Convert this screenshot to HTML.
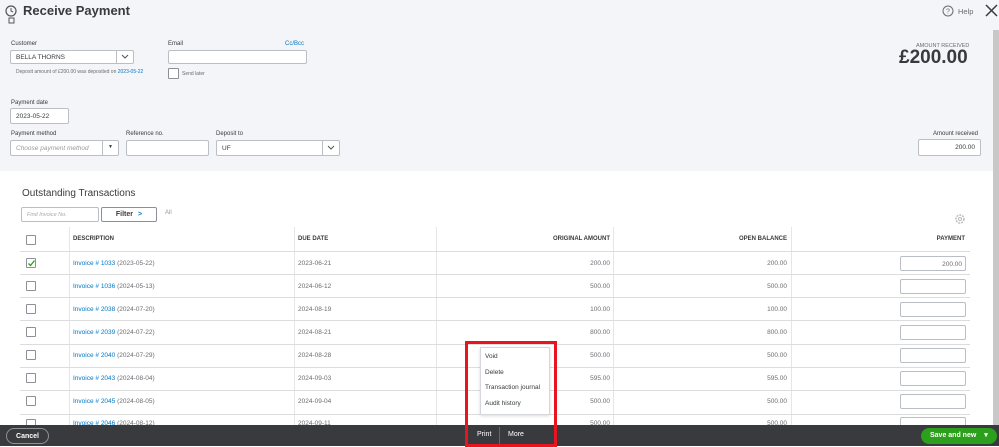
<!DOCTYPE html>
<html><head><meta charset="utf-8"><style>
*{box-sizing:border-box;margin:0;padding:0}
body{width:999px;height:446px;overflow:hidden;font-family:"Liberation Sans",sans-serif;background:#fff;position:relative;color:#393a3d}
.a{position:absolute}
.top{left:0;top:0;width:999px;height:171px;background:#f4f5f8}
.lbl{font-size:6px;color:#393a3d}
.inp{background:#fff;border:1px solid #babec5;border-radius:2px;font-size:6.5px;padding:0 5px;display:flex;align-items:center}
.th{font-size:6px;font-weight:bold;top:236px}
.row{left:20px;width:950px;height:1px;background:#dcdcdc}
.cb{width:10px;height:10px;border:1px solid #8d9096;border-radius:1px;background:#fff}
.t{font-size:6.5px;color:#6b6c72}
.lk{color:#0077c5}
.r{text-align:right}
.pi{width:66px;height:15px;border:1px solid #babec5;border-radius:2px;background:#fff}
</style></head><body>
<div class="a top"></div>
<svg class="a" style="left:4px;top:4px" width="14" height="20" viewBox="0 0 14 20"><circle cx="7" cy="7" r="5" fill="none" stroke="#555" stroke-width="1.2"/><path d="M7 4v3l2 1" stroke="#555" fill="none"/><rect x="5" y="14" width="5" height="5" fill="none" stroke="#555"/></svg>
<div class="a" style="left:23px;top:3px;font-size:13px;font-weight:bold;color:#393a3d">Receive Payment</div>
<svg class="a" style="left:942px;top:5px" width="12" height="12"><circle cx="6" cy="6" r="5" fill="none" stroke="#6b6c72"/><text x="6" y="8.5" font-size="7" text-anchor="middle" fill="#6b6c72" font-family="Liberation Sans">?</text></svg>
<div class="a" style="left:958px;top:7px;font-size:7.5px;color:#6b6c72">Help</div>
<svg class="a" style="left:985px;top:4px" width="13" height="13"><path d="M1 1L12 12M12 1L1 12" stroke="#393a3d" stroke-width="1.5"/></svg>
<div class="a" style="left:993px;top:30px;width:6px;height:395px;background:#c8c8c8"></div>
<div class="a lbl" style="left:11px;top:41px">Customer</div>
<div class="a inp" style="left:10px;top:50px;width:124px;height:14px">BELLA THORNS</div>
<div class="a" style="left:116px;top:50px;width:1px;height:14px;background:#babec5"></div>
<svg class="a" style="left:121px;top:54px" width="8" height="6"><path d="M1 1l3 3 3-3" stroke="#555" fill="none"/></svg>
<div class="a" style="left:16px;top:69px;font-size:5px;color:#6b6c72">Deposit amount of £200.00 was deposited on <span class="lk">2023-05-22</span></div>
<div class="a lbl" style="left:168px;top:41px">Email</div>
<div class="a lbl lk" style="left:285px;top:41px">Cc/Bcc</div>
<div class="a inp" style="left:168px;top:50px;width:139px;height:14px"></div>
<div class="a cb" style="left:168px;top:68px;width:11px;height:11px"></div>
<div class="a" style="left:182px;top:71px;font-size:5px;color:#6b6c72">Send later</div>
<div class="a" style="left:916px;top:43px;font-size:5.5px;color:#6b6c72">AMOUNT RECEIVED</div>
<div class="a" style="left:899px;top:47px;font-size:19px;font-weight:bold;color:#393a3d">£200.00</div>
<div class="a lbl" style="left:11px;top:100px">Payment date</div>
<div class="a inp" style="left:10px;top:108px;width:59px;height:16px">2023-05-22</div>
<div class="a lbl" style="left:11px;top:131px">Payment method</div>
<div class="a inp" style="left:10px;top:140px;width:109px;height:16px;color:#999;font-style:italic">Choose payment method</div>
<div class="a" style="left:102px;top:140px;width:1px;height:16px;background:#babec5"></div>
<div class="a" style="left:108px;top:144px;font-size:5px">▼</div>
<div class="a lbl" style="left:126px;top:131px">Reference no.</div>
<div class="a inp" style="left:126px;top:140px;width:83px;height:16px"></div>
<div class="a lbl" style="left:216px;top:131px">Deposit to</div>
<div class="a inp" style="left:216px;top:140px;width:124px;height:16px">UF</div>
<div class="a" style="left:322px;top:140px;width:1px;height:16px;background:#babec5"></div>
<svg class="a" style="left:327px;top:145px" width="8" height="6"><path d="M1 1l3 3 3-3" stroke="#555" fill="none"/></svg>
<div class="a lbl" style="left:933px;top:131px">Amount received</div>
<div class="a inp" style="left:918px;top:139px;width:63px;height:17px;justify-content:flex-end">200.00</div>
<div class="a" style="left:22px;top:188px;font-size:10px;color:#393a3d">Outstanding Transactions</div>
<div class="a inp" style="left:21px;top:207px;width:78px;height:15px;color:#aaa;font-style:italic;font-size:5.5px">Find Invoice No.</div>
<div class="a inp" style="left:101px;top:207px;width:56px;height:15px;justify-content:center;font-weight:bold;font-size:7px;border-color:#8d9096">Filter <span style="color:#0077c5;margin-left:5px">&gt;</span></div>
<div class="a" style="left:165px;top:210px;font-size:6px;color:#999">All</div>
<svg class="a" style="left:954px;top:213px" width="12" height="12"><circle cx="6" cy="6" r="4" fill="none" stroke="#bbb" stroke-width="1.5" stroke-dasharray="2 1"/><circle cx="6" cy="6" r="1.5" fill="none" stroke="#bbb"/></svg>
<div class="a cb" style="left:26px;top:235px"></div>
<div class="a th" style="left:73px">DESCRIPTION</div>
<div class="a th" style="left:298px">DUE DATE</div>
<div class="a th r" style="left:500px;width:110px">ORIGINAL AMOUNT</div>
<div class="a th r" style="left:680px;width:107px">OPEN BALANCE</div>
<div class="a th r" style="left:860px;width:105px">PAYMENT</div>
<div class="a" style="left:69px;top:227px;width:1px;height:198px;background:#e6e6e6"></div>
<div class="a" style="left:294px;top:227px;width:1px;height:198px;background:#e6e6e6"></div>
<div class="a" style="left:436px;top:227px;width:1px;height:198px;background:#e6e6e6"></div>
<div class="a" style="left:613px;top:227px;width:1px;height:198px;background:#e6e6e6"></div>
<div class="a" style="left:791px;top:227px;width:1px;height:198px;background:#e6e6e6"></div>
<div class="a row" style="top:251px"></div><div class="a row" style="top:274px"></div><div class="a row" style="top:297px"></div><div class="a row" style="top:320px"></div><div class="a row" style="top:344px"></div><div class="a row" style="top:367px"></div><div class="a row" style="top:390px"></div><div class="a row" style="top:414px"></div>

<div class="a cb" style="left:26px;top:258px"></div><svg class="a" style="left:27px;top:259px" width="9" height="9"><path d="M1.5 4.5l2 2 4-5" stroke="#2ca01c" stroke-width="1.3" fill="none"/></svg>
<div class="a t" style="left:73px;top:260px"><span class="lk">Invoice # 1033</span> (2023-05-22)</div><div class="a t" style="left:298px;top:260px">2023-06-21</div><div class="a t r" style="left:540px;width:70px;top:260px">200.00</div><div class="a t r" style="left:717px;width:70px;top:260px">200.00</div><div class="a pi" style="left:900px;top:256px"></div><div class="a t r" style="left:900px;width:62px;top:261px">200.00</div>

<div class="a cb" style="left:26px;top:281px"></div><div class="a t" style="left:73px;top:283px"><span class="lk">Invoice # 1036</span> (2024-05-13)</div><div class="a t" style="left:298px;top:283px">2024-06-12</div><div class="a t r" style="left:540px;width:70px;top:283px">500.00</div><div class="a t r" style="left:717px;width:70px;top:283px">500.00</div><div class="a pi" style="left:900px;top:279px"></div>

<div class="a cb" style="left:26px;top:304px"></div><div class="a t" style="left:73px;top:306px"><span class="lk">Invoice # 2038</span> (2024-07-20)</div><div class="a t" style="left:298px;top:306px">2024-08-19</div><div class="a t r" style="left:540px;width:70px;top:306px">100.00</div><div class="a t r" style="left:717px;width:70px;top:306px">100.00</div><div class="a pi" style="left:900px;top:302px"></div>

<div class="a cb" style="left:26px;top:327px"></div><div class="a t" style="left:73px;top:329px"><span class="lk">Invoice # 2039</span> (2024-07-22)</div><div class="a t" style="left:298px;top:329px">2024-08-21</div><div class="a t r" style="left:540px;width:70px;top:329px">800.00</div><div class="a t r" style="left:717px;width:70px;top:329px">800.00</div><div class="a pi" style="left:900px;top:325px"></div>

<div class="a cb" style="left:26px;top:350px"></div><div class="a t" style="left:73px;top:352px"><span class="lk">Invoice # 2040</span> (2024-07-29)</div><div class="a t" style="left:298px;top:352px">2024-08-28</div><div class="a t r" style="left:540px;width:70px;top:352px">500.00</div><div class="a t r" style="left:717px;width:70px;top:352px">500.00</div><div class="a pi" style="left:900px;top:348px"></div>

<div class="a cb" style="left:26px;top:373px"></div><div class="a t" style="left:73px;top:375px"><span class="lk">Invoice # 2043</span> (2024-08-04)</div><div class="a t" style="left:298px;top:375px">2024-09-03</div><div class="a t r" style="left:540px;width:70px;top:375px">595.00</div><div class="a t r" style="left:717px;width:70px;top:375px">595.00</div><div class="a pi" style="left:900px;top:371px"></div>

<div class="a cb" style="left:26px;top:396px"></div><div class="a t" style="left:73px;top:398px"><span class="lk">Invoice # 2045</span> (2024-08-05)</div><div class="a t" style="left:298px;top:398px">2024-09-04</div><div class="a t r" style="left:540px;width:70px;top:398px">500.00</div><div class="a t r" style="left:717px;width:70px;top:398px">500.00</div><div class="a pi" style="left:900px;top:394px"></div>

<div class="a cb" style="left:26px;top:419px"></div><div class="a t" style="left:73px;top:420px"><span class="lk">Invoice # 2046</span> (2024-08-12)</div><div class="a t" style="left:298px;top:420px">2024-09-11</div><div class="a t r" style="left:540px;width:70px;top:420px">500.00</div><div class="a t r" style="left:717px;width:70px;top:420px">500.00</div><div class="a pi" style="left:900px;top:417px"></div>

<div class="a" style="left:0;top:425px;width:999px;height:21px;background:#393a3d"></div>
<div class="a" style="left:6px;top:428px;width:43px;height:16px;border:1px solid #8d9096;border-radius:9px;color:#fff;font-size:7px;font-weight:bold;display:flex;align-items:center;justify-content:center">Cancel</div>
<div class="a" style="left:477px;top:431px;font-size:7px;color:#fff">Print</div>
<div class="a" style="left:499px;top:427px;width:1px;height:17px;background:#666"></div>
<div class="a" style="left:508px;top:431px;font-size:7px;color:#fff">More</div>
<div class="a" style="left:921px;top:428px;width:76px;height:16px;background:#2ca01c;border-radius:9px;color:#fff;font-size:7px;font-weight:bold;padding-left:9px;line-height:16px">Save and new <span style="margin-left:6px">▾</span></div>
<div class="a" style="left:480px;top:347px;width:70px;height:68px;background:#fff;border:1px solid #d4d7dc;box-shadow:0 1px 3px rgba(0,0,0,.15)"></div>
<div class="a t" style="left:485px;top:353px;color:#393a3d">Void</div>
<div class="a t" style="left:485px;top:369px;color:#393a3d">Delete</div>
<div class="a t" style="left:485px;top:384px;color:#393a3d">Transaction journal</div>
<div class="a t" style="left:485px;top:400px;color:#393a3d">Audit history</div>
<div class="a" style="left:465px;top:341px;width:92px;height:106px;border:3px solid #e8141e"></div>
</body></html>
